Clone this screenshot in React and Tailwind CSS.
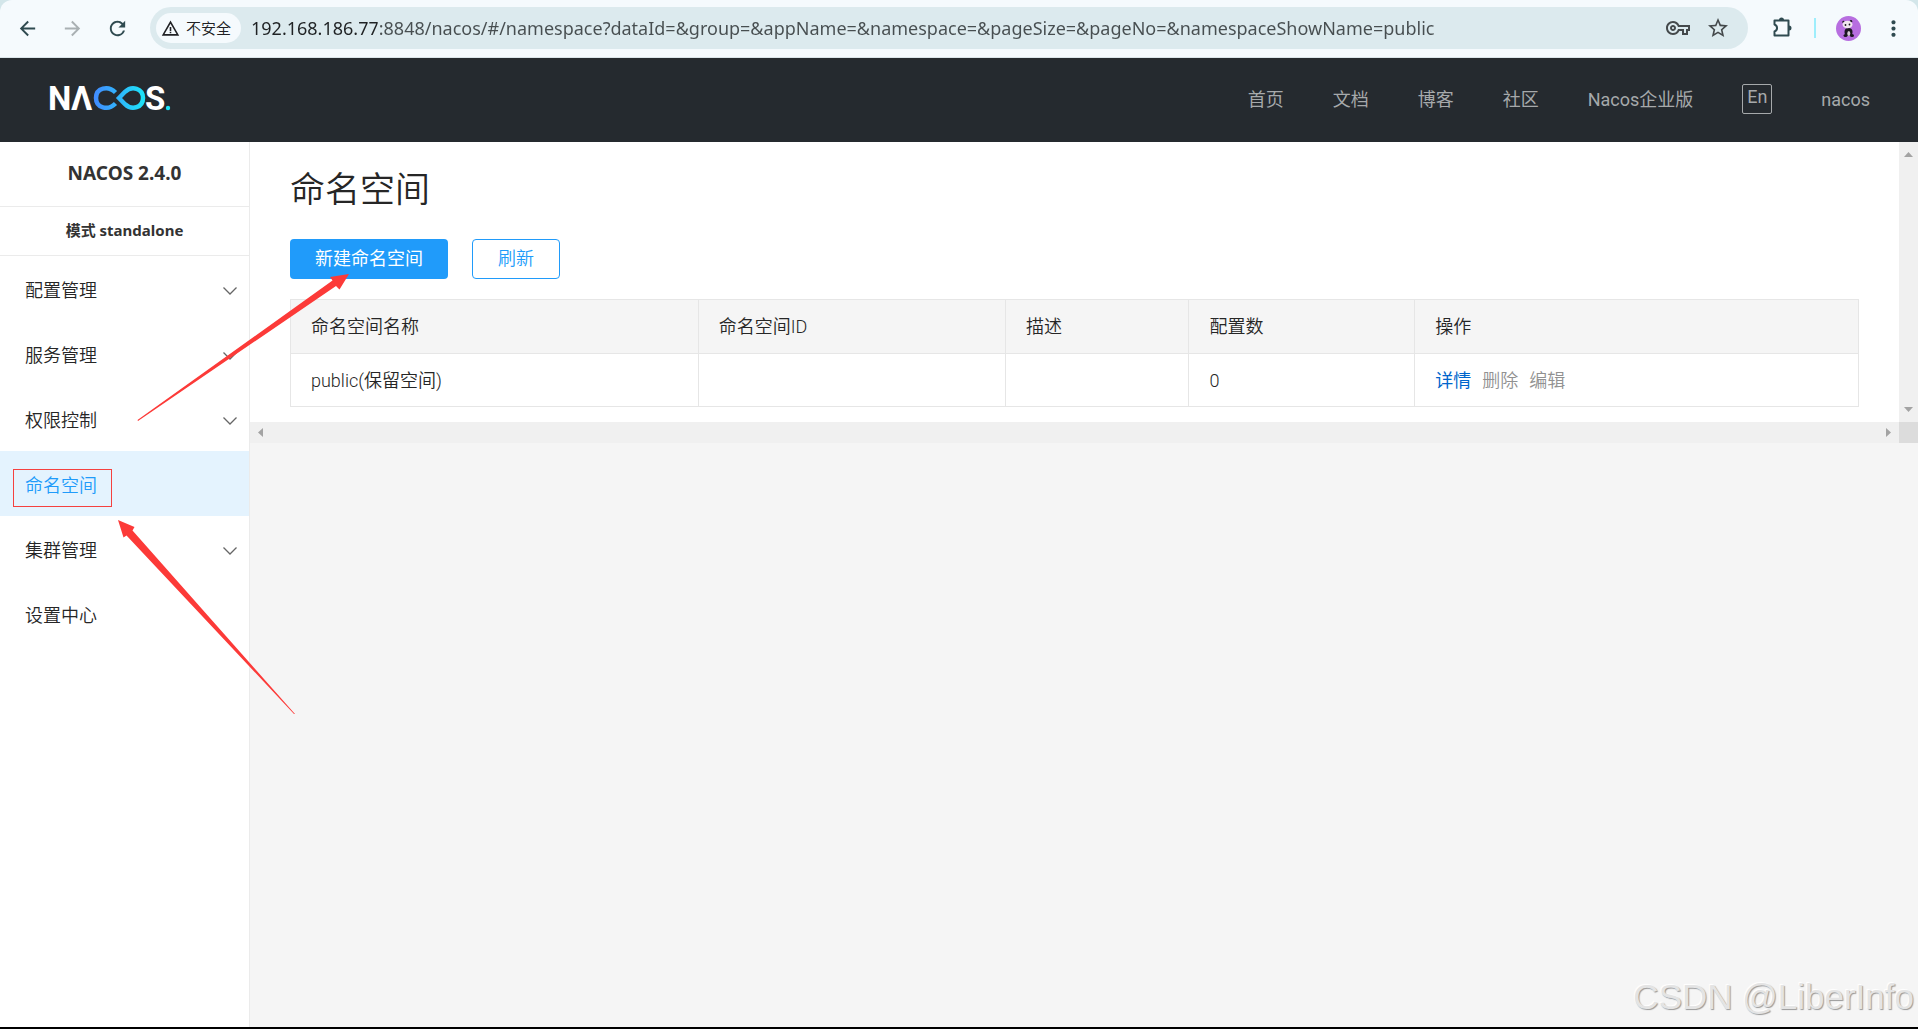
import {
  MdArrowBack,
  MdArrowForward,
  MdRefresh,
  MdWarningAmber,
  MdOutlineVpnKey,
  MdStarBorder,
  MdMoreVert,
} from "react-icons/md";

const NAV_LINKS = ["首页", "文档", "博客", "社区", "Nacos企业版"];

const MENU = [
  { label: "配置管理", expandable: true },
  { label: "服务管理", expandable: true },
  { label: "权限控制", expandable: true },
  { label: "命名空间", active: true },
  { label: "集群管理", expandable: true },
  { label: "设置中心" },
];

const NAMESPACES = [
  { name: "public(保留空间)", id: "", desc: "", configs: 0 },
];

function ExtensionIcon() {
  return (
    <svg width="22" height="22" viewBox="0 0 22 22" className="text-[#2f4a50]">
      <path
        d="M2.500 3.500H16.500V18.500H2.500V14.500c3.400-1.200 3.400-5.800 0-7z"
        fill="none"
        stroke="currentColor"
        strokeWidth="2"
        strokeLinejoin="round"
      />
      <path d="M7 3a2.500 2.500 0 0 1 5 0zM17 8.500a2.500 2.500 0 0 1 0 5z" fill="currentColor" />
    </svg>
  );
}

function Avatar() {
  return (
    <svg width="25" height="25" viewBox="0 0 25 25">
      <circle cx="12.500" cy="12.500" r="12.500" fill="#b76ee0" />
      <ellipse cx="12.500" cy="16" rx="4" ry="4" fill="#1b1620" />
      <ellipse cx="9.500" cy="19.500" rx="2" ry="1.500" fill="#1b1620" />
      <ellipse cx="16" cy="19.500" rx="2" ry="1.500" fill="#1b1620" />
      <ellipse cx="12.800" cy="17.500" rx="1.500" ry="2.500" fill="#d8ccd8" />
      <circle cx="7.500" cy="6" r="1.200" fill="#1b1620" />
      <circle cx="15" cy="5.200" r="1.200" fill="#1b1620" />
      <ellipse cx="11.500" cy="8.500" rx="5" ry="3.800" fill="#f0e6ee" />
      <circle cx="9.500" cy="9" r=".9" fill="#1b1620" />
      <circle cx="13.500" cy="8.500" r=".9" fill="#1b1620" />
    </svg>
  );
}

function BrowserBar() {
  return (
    <div className="bg-[#d3e6ea]">
      <div className="flex h-[58px] items-center rounded-t-xl border-b border-[#dbe5e9] bg-[#f5fafd] pr-3 pb-px pl-4 font-['Noto_Sans','Noto_Sans_CJK_SC',sans-serif]">
        <div className="flex w-[134px] shrink-0 items-center gap-[22px] text-[#2f4a50]">
          <button type="button" aria-label="Back">
            <MdArrowBack size={23} />
          </button>
          <button type="button" aria-label="Forward" className="text-[#a9b0b3]">
            <MdArrowForward size={23} />
          </button>
          <button type="button" aria-label="Reload">
            <MdRefresh size={23} />
          </button>
        </div>
        <div className="flex h-[42px] flex-1 items-center rounded-full bg-[#dceaee] pr-[18px] pl-[6px]">
          <button
            type="button"
            className="flex h-[30px] shrink-0 items-center gap-[6px] rounded-full bg-[#f5fafd] pr-[10px] pl-[5px] text-[15px] font-[350] text-[#202124]"
          >
            <MdWarningAmber size={19} />
            不安全
          </button>
          <input
            type="text"
            aria-label="Address"
            defaultValue="192.168.186.77:8848/nacos/#/namespace?dataId=&group=&appName=&namespace=&pageSize=&pageNo=&namespaceShowName=public"
            className="ml-[10px] min-w-0 flex-1 bg-linear-to-r from-[#1f2224] from-[126px] to-[#474e50] to-[126px] bg-clip-text pb-px text-[18px] leading-[28px] text-transparent outline-none"
          />
          <div className="flex items-center gap-4 text-[#44494b]">
            <button type="button" aria-label="Passwords">
              <MdOutlineVpnKey size={24} />
            </button>
            <button type="button" aria-label="Bookmark">
              <MdStarBorder size={24} />
            </button>
          </div>
        </div>
        <div className="flex shrink-0 items-center pl-6">
          <button type="button" aria-label="Extensions">
            <ExtensionIcon />
          </button>
          <span className="ml-5 h-5 w-[2px] bg-[#9eeefc]" />
          <button type="button" aria-label="Profile" className="ml-5">
            <Avatar />
          </button>
          <button type="button" aria-label="Menu" className="ml-5 text-[#2f4a50]">
            <MdMoreVert size={25} />
          </button>
        </div>
      </div>
    </div>
  );
}

function Logo() {
  return (
    <svg width="130" height="48" viewBox="-4 -11 130 48" role="img" aria-label="Nacos">
      <defs>
        <linearGradient id="loop" x1="44" x2="96" y1="0" y2="0" gradientUnits="userSpaceOnUse">
          <stop offset="0" stopColor="#4389ff" />
          <stop offset="1" stopColor="#1ce4f8" />
        </linearGradient>
      </defs>
      <g fill="#fff" className="font-['Roboto',sans-serif] text-[33px] font-bold">
        <text x="-1" y="25">N</text>
        <text x="22" y="25">Λ</text>
        <text x="96" y="25">S</text>
      </g>
      <g fill="none" stroke="url(#loop)" strokeWidth="4.500">
        <path d="M66.500 7.500C59 0 47 3 47 13s12 13 19.500 5.500" />
        <path d="M70 13l6-6.200C83 0 94 3.500 94 13s-11 13-18 6.200z" />
      </g>
      <circle cx="119" cy="23" r="2.200" fill="#1ce4f8" />
    </svg>
  );
}

function Header() {
  return (
    <header className="flex h-[84px] shrink-0 items-center justify-between bg-[#252a2f] pr-12 pb-[2px] pl-[45px]">
      <a href="#/" className="pb-[2px]">
        <Logo />
      </a>
      <nav className="flex items-center gap-[49px] text-[18px] text-[#a6a9ab]">
        {NAV_LINKS.map((label) => (
          <a key={label} href="#/">
            {label}
          </a>
        ))}
        <button
          type="button"
          className="h-[30px] w-[30px] rounded-xs border border-[#a6a9ab] pb-1 leading-6"
        >
          En
        </button>
        <a href="#/">nacos</a>
      </nav>
    </header>
  );
}

function Chevron() {
  return (
    <svg width="14" height="8" viewBox="0 0 14 8" fill="none" stroke="#666" strokeWidth="1.300">
      <path d="M.5.5 7 7 13.500.5" />
    </svg>
  );
}

function Sidebar() {
  return (
    <aside className="w-[250px] shrink-0 border-r border-[#ebebeb] bg-white text-[#333]">
      <div className="font-['Noto_Sans','Noto_Sans_CJK_SC',sans-serif] font-bold">
        <h1 className="flex h-[65px] items-center justify-center border-b border-[#ebebeb] pb-[2px] text-[19px]">
          NACOS 2.4.0
        </h1>
        <p className="flex h-[49px] items-center justify-center border-b border-[#ebebeb] pb-[2px] text-[15px]">
          模式 standalone
        </p>
      </div>
      <ul>
        {MENU.map((item) => (
          <li key={item.label}>
            <a
              href="#/"
              className={
                item.active
                  ? "flex h-[65px] items-center bg-[#e4f3fe] px-[25px] pt-1 text-[18px] font-[350] text-[#209bfa]"
                  : "flex h-[65px] items-center justify-between pt-1 pr-3 pl-[25px] text-[18px] font-[350] text-[#262626]"
              }
            >
              {item.label}
              {item.expandable && <Chevron />}
            </a>
          </li>
        ))}
      </ul>
    </aside>
  );
}

function NamespaceTable() {
  return (
    <table className="w-full table-fixed border-collapse text-left text-[18px] font-[350] text-[#262626]">
      <colgroup>
        <col className="w-[26%]" />
        <col className="w-[19.6%]" />
        <col className="w-[11.7%]" />
        <col className="w-[14.4%]" />
        <col />
      </colgroup>
      <thead>
        <tr className="h-[54px] bg-[#f5f5f5] [&>th]:border [&>th]:border-[#e6e6e6] [&>th]:px-5 [&>th]:font-[350]">
          <th>命名空间名称</th>
          <th>命名空间ID</th>
          <th>描述</th>
          <th>配置数</th>
          <th>操作</th>
        </tr>
      </thead>
      <tbody>
        {NAMESPACES.map((ns) => (
          <tr
            key={ns.name}
            className="h-[53px] [&>td]:border [&>td]:border-[#e6e6e6] [&>td]:px-5"
          >
            <td>{ns.name}</td>
            <td>{ns.id}</td>
            <td>{ns.desc}</td>
            <td>{ns.configs}</td>
            <td>
              <div className="flex gap-[11px]">
                <a href="#/" className="font-normal text-[#0066cc]">
                  详情
                </a>
                <span className="text-[#919191]">删除</span>
                <span className="text-[#919191]">编辑</span>
              </div>
            </td>
          </tr>
        ))}
      </tbody>
    </table>
  );
}

function ScrollArrow({ d }) {
  return (
    <svg width="9" height="9" viewBox="0 0 9 9" fill="#a3a3a3">
      <path d={d} />
    </svg>
  );
}

function NamespacePage() {
  return (
    <main className="min-w-0 flex-1 bg-[#f5f5f5]">
      <div className="flex">
        <section className="min-w-0 flex-1 bg-white pt-6 pr-10 pb-[15px] pl-10">
          <h2 className="text-[35px] leading-[50px] font-[350] text-[#262626]">命名空间</h2>
          <div className="mt-[23px] mb-5 flex gap-6 text-[18px]">
            <button
              type="button"
              className="h-10 rounded-[4px] bg-[#209bfa] px-[25px] pb-[2px] text-white"
            >
              新建命名空间
            </button>
            <button
              type="button"
              className="h-10 rounded-[4px] border border-[#209bfa] px-[25px] pb-[2px] font-[350] text-[#209bfa]"
            >
              刷新
            </button>
          </div>
          <NamespaceTable />
        </section>
        <div className="flex w-[19px] flex-col items-center justify-between bg-[#f0f0f0] py-2">
          <ScrollArrow d="M0 7h9L4.500 2z" />
          <ScrollArrow d="M0 2h9L4.500 7z" />
        </div>
      </div>
      <div className="flex h-[21px] items-center bg-[#f0f0f0]">
        <div className="flex flex-1 justify-between px-[6px]">
          <ScrollArrow d="M7 0v9L2 4.500z" />
          <ScrollArrow d="M2 0v9l5-4.500z" />
        </div>
        <div className="h-full w-[19px] bg-[#dcdcdc]" />
      </div>
    </main>
  );
}

// red highlight box and arrows drawn over the console
function Annotations() {
  return (
    <svg
      className="pointer-events-none absolute top-0 left-0"
      width="600"
      height="760"
      viewBox="0 0 600 760"
      fill="#fc3a38"
    >
      <rect x="13.500" y="469.500" width="98" height="37" fill="none" stroke="#f5413f" />
      <path d="M349 274 330 277 332.500 280.500 137.500 420 138 421 336 286 339.500 289.500z" />
      <path d="M118 520 134.500 527 132.500 530.500 295 714 294 714 126.500 535.500 123.500 537.500z" />
    </svg>
  );
}

function App() {
  return (
    <div className="relative flex min-h-screen flex-col border-b-2 border-black">
      <BrowserBar />
      <div className="flex flex-1 flex-col font-['Roboto','Noto_Sans_CJK_SC',sans-serif]">
        <Header />
        <div className="flex flex-1">
          <Sidebar />
          <NamespacePage />
        </div>
      </div>
      <Annotations />
      <p className="absolute right-1 bottom-2 font-['Liberation_Sans',sans-serif] text-[35px] leading-[44px] text-[#e4e4e4] [text-shadow:1px_1px_1px_#999,-1px_-1px_1px_#fff]">
        CSDN @LiberInfo
      </p>
    </div>
  );
}

export default App;
